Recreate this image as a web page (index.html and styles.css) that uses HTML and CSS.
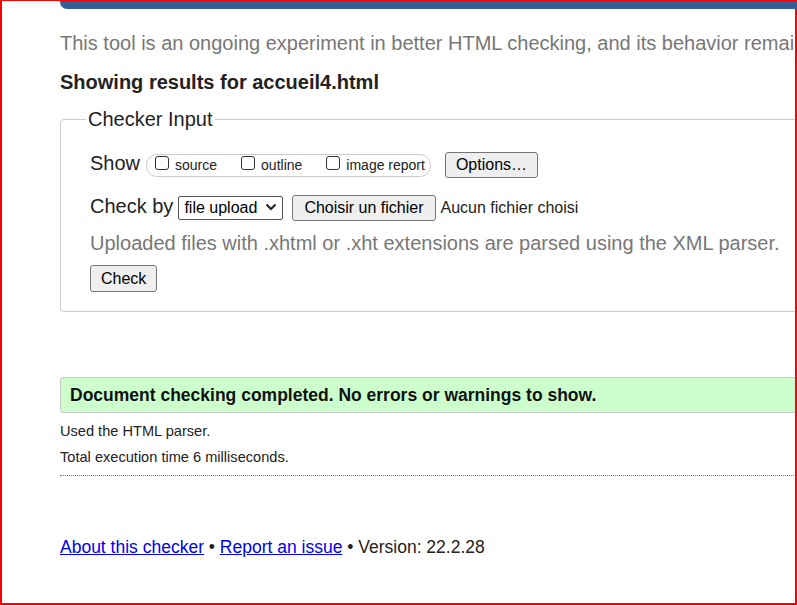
FILE: index.html
```html
<!DOCTYPE html>
<html lang="en">
<head>
<meta charset="utf-8">
<title>Nu Html Checker</title>
<link rel="stylesheet" href="styles.css">
</head>
<body>
<div class="frame"></div>
<div class="page">
  <div class="header-bar"></div>
  <p class="intro">This tool is an ongoing experiment in better HTML checking, and its behavior remains subject to change</p>
  <p class="showing">Showing results for accueil4.html</p>
  <fieldset class="checker">
    <legend>Checker Input</legend>
    <div class="row">
      <span class="row-label">Show</span>
      <span class="opts">
        <label class="opt"><input type="checkbox" class="cb"><span class="opt-text">source</span></label>
        <label class="opt"><input type="checkbox" class="cb"><span class="opt-text">outline</span></label>
        <label class="opt"><input type="checkbox" class="cb"><span class="opt-text">image report</span></label>
      </span>
      <button class="btn btn-options" type="button">Options…</button>
    </div>
    <div class="row row-check">
      <span class="row-label">Check by</span>
      <span class="select-wrap">
        <select class="select"><option>file upload</option></select>
        <svg class="chev" width="12" height="8" viewBox="0 0 12 8"><path d="M1.5 1.5 L6 6 L10.5 1.5" stroke="#222" stroke-width="2" fill="none"/></svg>
      </span>
      <button class="btn btn-file" type="button">Choisir un fichier</button>
      <span class="no-file">Aucun fichier choisi</span>
    </div>
    <p class="hint">Uploaded files with .xhtml or .xht extensions are parsed using the XML parser.</p>
    <button class="btn btn-check" type="button">Check</button>
  </fieldset>
  <div class="success">Document checking completed. No errors or warnings to show.</div>
  <p class="meta">Used the HTML parser.</p>
  <p class="meta meta-2">Total execution time 6 milliseconds.</p>
  <div class="sep"></div>
  <p class="footer"><a href="#">About this checker</a> • <a href="#">Report an issue</a> • Version: 22.2.28</p>
</div>
</body>
</html>
```

FILE: styles.css
```css
html, body {
  margin: 0;
  padding: 0;
  height: 605px;
  overflow: hidden;
}
body {
  font-family: "Liberation Sans", Arial, sans-serif;
  color: #222;
  background: #fff;
}
.frame {
  position: fixed;
  inset: 0;
  border-style: solid;
  border-color: #ff0000;
  border-width: 1px 2px 2px 2px;
  pointer-events: none;
  z-index: 5;
}
.page {
  width: 1100px;
  padding: 1px 0 0 60px;
}
.header-bar {
  position: relative;
  z-index: 6;
  height: 8px;
  background: #365d96;
  border-radius: 0 0 0 7px;
}
.intro {
  margin: 22px 0 0;
  font-size: 20px;
  line-height: 24px;
  color: #777;
  white-space: nowrap;
}
.showing {
  margin: 15px 0 0;
  font-size: 20px;
  line-height: 24px;
  font-weight: bold;
}
.checker {
  margin: 13px 0 0;
  border: 1px solid #cccccc;
  border-radius: 4px;
  padding: 21px 29px 19px;
  font-size: 20px;
}
.checker legend {
  font-size: 20px;
  line-height: 24px;
  padding: 0 2px;
  margin-left: -4px;
}
.row {
  display: flex;
  align-items: baseline;
  height: 26px;
}
.row-check {
  margin-top: 17px;
}
.row-label {
  font-size: 20px;
  line-height: 22px;
}
.opts {
  display: inline-flex;
  align-items: baseline;
  margin-left: 6px;
  border: 1px solid #cccccc;
  border-radius: 11px;
  padding: 0 5px 0 8px;
  line-height: 21px;
  font-size: 14px;
}
.opt {
  display: inline-flex;
  align-items: baseline;
}
.opt + .opt {
  margin-left: 24px;
}
.cb {
  appearance: none;
  -webkit-appearance: none;
  display: inline-block;
  width: 14px;
  height: 14px;
  margin: 0;
  border: 1px solid #333;
  border-radius: 3px;
  background: #fff;
  box-sizing: border-box;
  align-self: baseline;
}
.opt-text {
  margin-left: 6px;
}
.btn {
  font-family: "Liberation Sans", Arial, sans-serif;
  font-size: 16px;
  color: #000;
  background: #efefef;
  border: 1px solid #767676;
  border-radius: 3px;
  padding: 1px 10px;
  line-height: 22px;
  margin: 0;
}
.btn-options {
  margin-left: 14px;
}
.select-wrap {
  position: relative;
  display: inline-block;
  margin-left: 5px;
}
.select {
  appearance: none;
  -webkit-appearance: none;
  box-sizing: border-box;
  width: 105px;
  font-family: "Liberation Sans", Arial, sans-serif;
  font-size: 16px;
  line-height: 20px;
  height: 24px;
  color: #000;
  background: #fff;
  border: 1px solid #555;
  border-radius: 2px;
  padding: 1px 22px 1px 5px;
  margin: 0;
}
.chev {
  position: absolute;
  right: 6px;
  top: 8px;
}
.btn-file {
  margin-left: 9px;
  padding: 1px 11px;
}
.no-file {
  margin-left: 5px;
  font-size: 16px;
}
.hint {
  margin: 10px 0 0;
  font-size: 20px;
  line-height: 24px;
  color: #777;
  white-space: nowrap;
}
.btn-check {
  display: block;
  margin-top: 10px;
  line-height: 23px;
}
.success {
  margin-top: 65px;
  border: 1px solid #c8c8c8;
  border-radius: 3px;
  background: #ccffcc;
  padding: 0 9px;
  line-height: 34px;
  font-size: 17.5px;
  font-weight: bold;
  color: #111;
}
.meta {
  margin: 8px 0 0;
  font-size: 14.6px;
  line-height: 20px;
}
.meta-2 {
  margin-top: 6px;
}
.sep {
  margin-top: 8px;
  border-top: 1px dotted #777;
}
.footer {
  margin: 60px 0 0;
  font-size: 17.5px;
  line-height: 22px;
}
.footer a {
  color: #0000ee;
}
```
